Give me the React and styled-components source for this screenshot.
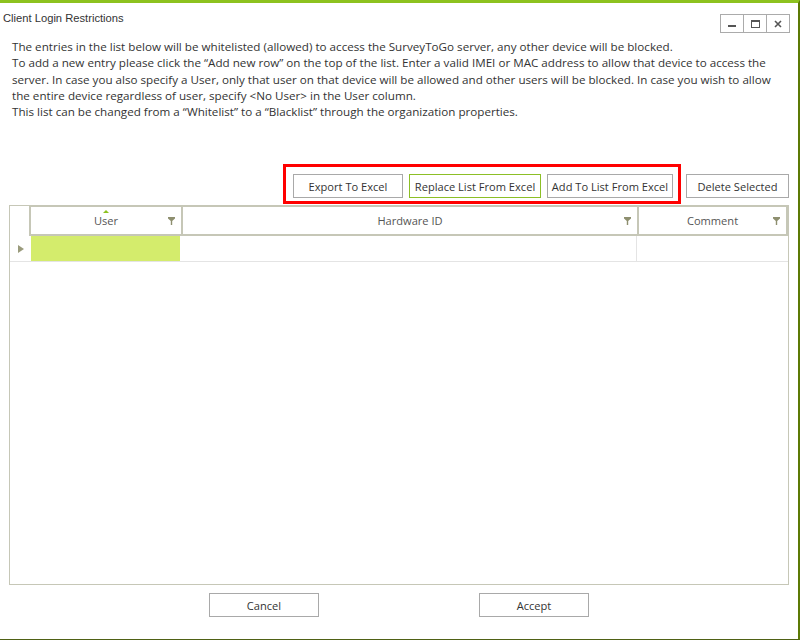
import React from 'react';
import styled, { createGlobalStyle } from 'styled-components';

const GlobalStyle = createGlobalStyle`
	html, body {
		margin: 0;
		padding: 0;
		background: #ffffff;
	}
	body {
		font-family: 'Open Sans', 'Noto Sans', sans-serif;
		color: #333333;
	}
`;

const Window = styled.div`
	box-sizing: border-box;
	width: 800px;
	height: 640px;
	background: #ffffff;
	border-top: 3px solid #8dc21f;
	border-right: 2px solid #5c7a05;
	border-bottom: 1px solid #4f6115;
	display: flex;
	flex-direction: column;
`;

const TitleBar = styled.div`
	display: flex;
	align-items: flex-start;
	justify-content: space-between;
	height: 36px;
	padding: 0 8px 0 3px;
`;

const Title = styled.div`
	font-family: 'Liberation Sans', Arial, sans-serif;
	font-size: 11.2px;
	color: #333333;
	margin-top: 9px;
`;

const Controls = styled.div`
	display: flex;
	margin-top: 11px;
`;

const ControlButton = styled.div`
	box-sizing: border-box;
	width: 24px;
	height: 19px;
	border: 1px solid #ababab;
	margin-left: -1px;
	display: flex;
	align-items: center;
	justify-content: center;
	color: #555555;
`;

const Description = styled.div`
	padding: 0 12px;
	font-size: 11.65px;
	line-height: 16.25px;
	color: #333333;
	white-space: nowrap;
`;

const Toolbar = styled.div`
	display: flex;
	justify-content: flex-end;
	align-items: center;
	gap: 13px;
	margin-top: 54px;
	padding-right: 9px;
`;

const HighlightGroup = styled.div`
	position: relative;
	display: flex;
	gap: 6px;

	&::after {
		content: '';
		position: absolute;
		top: -10px;
		left: -10px;
		right: -8px;
		bottom: -6px;
		border: 3px solid #ff0000;
		pointer-events: none;
	}
`;

const Button = styled.div`
	box-sizing: border-box;
	width: ${(p) => p.$width}px;
	height: 24px;
	border: 1px solid ${(p) => (p.$active ? '#8cbf26' : '#a9a9a9')};
	background: #ffffff;
	display: flex;
	align-items: center;
	justify-content: center;
	font-size: 11.1px;
	color: #333333;
	white-space: nowrap;
`;

const Grid = styled.div`
	box-sizing: border-box;
	margin: 7px 9px 0 9px;
	height: 380px;
	border: 1px solid #c6c7b7;
	display: flex;
	flex-direction: column;
`;

const HeaderRow = styled.div`
	display: flex;
	height: 30px;
`;

const IndicatorCell = styled.div`
	box-sizing: border-box;
	width: 19px;
	flex: none;
	display: flex;
	align-items: center;
	justify-content: center;
`;

const HeaderCell = styled.div`
	position: relative;
	box-sizing: border-box;
	width: ${(p) => p.$width}px;
	flex: none;
	border-top: 1px solid #c6c7b7;
	border-bottom: 2px solid #c6c7b7;
	border-left: 2px solid #c6c7b7;
	border-right: ${(p) => (p.$last ? '2px solid #c6c7b7' : 'none')};
	display: flex;
	align-items: center;
	justify-content: center;
	font-size: 11.1px;
	color: #555555;
`;

const SortArrow = styled.span`
	position: absolute;
	top: 3px;
	left: 50%;
	margin-left: -3px;
	width: 0;
	height: 0;
	border-left: 3px solid transparent;
	border-right: 3px solid transparent;
	border-bottom: 3px solid #8dc21f;
`;

const FilterIcon = styled.svg`
	position: absolute;
	right: 6px;
	top: 50%;
	margin-top: -4px;
`;

const Row = styled.div`
	display: flex;
	height: 25px;
	border-bottom: 1px solid #e4e4e4;
`;

const RowArrow = styled.span`
	width: 0;
	height: 0;
	border-top: 4px solid transparent;
	border-bottom: 4px solid transparent;
	border-left: 6px solid #9a9b7c;
	margin-left: 2px;
`;

const Cell = styled.div`
	box-sizing: border-box;
	width: ${(p) => p.$width}px;
	flex: none;
	border-left: 1px solid ${(p) => (p.$divider ? '#e4e4e4' : 'transparent')};
	padding: 0 1px;
	background: ${(p) => (p.$selected ? '#d4ec6c' : '#ffffff')};
	background-clip: content-box;
`;

const Footer = styled.div`
	display: flex;
	justify-content: center;
	gap: 160px;
	margin-top: 8px;
`;

const columns = [
	{ title: 'User', width: 152, sorted: true },
	{ title: 'Hardware ID', width: 456 },
	{ title: 'Comment', width: 151 },
];

const Funnel = () => (
	<FilterIcon width="7" height="8" viewBox="0 0 7 8">
		<path d="M0 0h7v1.5L4.2 4v4H2.8V4L0 1.5z" fill="#8e8f6f" />
	</FilterIcon>
);

export default function App() {
	return (
		<>
			<GlobalStyle />
			<Window>
				<TitleBar>
					<Title>Client Login Restrictions</Title>
					<Controls>
						<ControlButton>
							<svg width="8" height="8" viewBox="0 0 8 8">
								<rect x="0" y="5" width="8" height="2" fill="#555" />
							</svg>
						</ControlButton>
						<ControlButton>
							<svg width="9" height="8" viewBox="0 0 9 8">
								<rect x="0.5" y="0.5" width="8" height="7" fill="none" stroke="#555" />
								<rect x="0" y="0" width="9" height="2" fill="#555" />
							</svg>
						</ControlButton>
						<ControlButton>
							<svg width="8" height="8" viewBox="0 0 8 8">
								<path d="M1 1l6 6M7 1L1 7" stroke="#555" strokeWidth="1.6" />
							</svg>
						</ControlButton>
					</Controls>
				</TitleBar>
				<Description>
					<div>The entries in the list below will be whitelisted (allowed) to access the SurveyToGo server, any other device will be blocked.</div>
					<div>To add a new entry please click the “Add new row” on the top of the list. Enter a valid IMEI or MAC address to allow that device to access the</div>
					<div>server. In case you also specify a User, only that user on that device will be allowed and other users will be blocked. In case you wish to allow</div>
					<div>the entire device regardless of user, specify &lt;No User&gt; in the User column.</div>
					<div>This list can be changed from a “Whitelist” to a “Blacklist” through the organization properties.</div>
				</Description>
				<Toolbar>
					<HighlightGroup>
						<Button $width={110}>Export To Excel</Button>
						<Button $width={132} $active>Replace List From Excel</Button>
						<Button $width={126}>Add To List From Excel</Button>
					</HighlightGroup>
					<Button $width={103}>Delete Selected</Button>
				</Toolbar>
				<Grid>
					<HeaderRow>
						<IndicatorCell />
						{columns.map((col, i) => (
							<HeaderCell key={col.title} $width={col.width} $last={i === columns.length - 1}>
								{col.sorted && <SortArrow />}
								{col.title}
								<Funnel />
							</HeaderCell>
						))}
					</HeaderRow>
					<Row>
						<IndicatorCell>
							<RowArrow />
						</IndicatorCell>
						<Cell $width={152} $selected />
						<Cell $width={455} />
						<Cell $width={152} $divider />
					</Row>
				</Grid>
				<Footer>
					<Button $width={110}>Cancel</Button>
					<Button $width={110}>Accept</Button>
				</Footer>
			</Window>
		</>
	);
}
